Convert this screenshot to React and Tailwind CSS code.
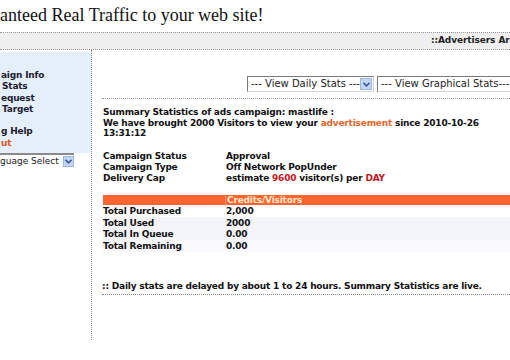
import React from 'react';

const verdana = { fontFamily: '"DejaVu Sans", Verdana, sans-serif' };

function SelectBox({ label, width, clip }) {
  return (
    <div
      className={`flex items-center h-[16px] bg-white border border-[#7a7a7a] border-r-[#d4d4d4] border-b-[#d4d4d4] shrink-0 ${width}`}
    >
      <span className="flex-1 pl-[3px] text-[10px] text-[#222] whitespace-nowrap overflow-hidden leading-none">
        {label}
      </span>
      {!clip && (
        <span className="w-[12px] h-[12px] mr-[1px] flex items-center justify-center bg-[#c3d5f5] border border-[#9db5e0]">
          <svg width="7" height="5" viewBox="0 0 7 5">
            <path d="M0.5 0.8 L3.5 3.8 L6.5 0.8" stroke="#3a5aa0" strokeWidth="1.6" fill="none" />
          </svg>
        </span>
      )}
    </div>
  );
}

export default function App() {
  const summaryRows = [
    ['Campaign Status', <span>Approval</span>],
    ['Campaign Type', <span>Off Network PopUnder</span>],
    [
      'Delivery Cap',
      <span>
        estimate <span className="text-[#c4161c]">9600</span> visitor(s) per{' '}
        <span className="text-[#c4161c]">DAY</span>
      </span>,
    ],
  ];

  const creditRows = [
    ['Total Purchased', '2,000', 'bg-white'],
    ['Total Used', '2000', 'bg-[#f4f5fb]'],
    ['Total In Queue', '0.00', 'bg-[#f4f5fb]'],
    ['Total Remaining', '0.00', 'bg-[#f9f9fd]'],
  ];

  return (
    <div className="w-[510px] h-[360px] overflow-hidden bg-white text-[#111]">
      {/* Page title */}
      <div
        className="h-[32px] pt-[4px] text-[18px] leading-[22px] whitespace-nowrap"
        style={{ fontFamily: '"Liberation Serif", "Times New Roman", serif' }}
      >
        anteed Real Traffic to your web site!
      </div>

      {/* Advertisers bar */}
      <div
        className="h-[18px] border-y border-dotted border-[#9a9a9a] bg-[#efefef] pl-[431px] flex items-center whitespace-nowrap overflow-hidden text-[9px] font-bold tracking-[-0.1px] text-[#222]"
        style={verdana}
      >
        ::Advertisers Ar
      </div>

      <div className="flex" style={verdana}>
        {/* Left menu */}
        <div className="w-[92px] h-[290px] border-r border-dotted border-[#8a8a8a] pt-[2px] shrink-0">
          <div className="h-[101px] bg-[#e5eefb] pt-[18px] pl-[1px] text-[9px] font-bold tracking-[-0.2px] leading-[11.3px] text-[#1c1c2e] whitespace-nowrap overflow-hidden">
            <div>aign Info</div>
            <div className="pl-[1px]">Stats</div>
            <div>equest</div>
            <div className="pl-[1px]">Target</div>
            <div className="h-[11.3px]" />
            <div>g Help</div>
            <div className="text-[#e0541e]">ut</div>
          </div>
          <div className="flex items-center h-[14px] w-[74px] border-t-2 border-[#8a8a8a] bg-white">
            <span className="flex-1 text-[9px] text-[#222] leading-none whitespace-nowrap overflow-hidden">
              guage Select
            </span>
            <span className="w-[11px] h-[11px] flex items-center justify-center bg-[#c3d5f5] border border-[#9db5e0]">
              <svg width="7" height="5" viewBox="0 0 7 5">
                <path d="M0.5 0.8 L3.5 3.8 L6.5 0.8" stroke="#3a5aa0" strokeWidth="1.6" fill="none" />
              </svg>
            </span>
          </div>
        </div>

        {/* Main content */}
        <div className="flex-1 min-w-0">
          <div className="flex gap-[3px] pl-[155px] pt-[26px] overflow-hidden">
            <SelectBox label="--- View Daily Stats ---" width="w-[127px]" />
            <SelectBox label="--- View Graphical Stats---" width="w-[140px]" clip />
          </div>

          <div className="ml-[10px] mt-[6px] border-t border-dotted border-[#a0a0a0]" />

          <div className="pl-[11px] pt-[8px] text-[9px] font-bold tracking-[-0.2px] leading-[10.5px] text-[#111]">
            <div>Summary Statistics of ads campaign: mastlife :</div>
            <div>
              We have brought 2000 Visitors to view your{' '}
              <span className="text-[#e2662c]">advertisement</span> since 2010-10-26
              <br />
              13:31:12
            </div>

            <div className="mt-[12px]">
              {summaryRows.map(([label, value]) => (
                <div key={label} className="flex h-[11.3px] items-center">
                  <span className="w-[123px] shrink-0">{label}</span>
                  {value}
                </div>
              ))}
            </div>

            <div className="mt-[11px] -mr-[20px]">
              <div className="flex h-[10px] items-center bg-[#fa6431]">
                <span className="w-[122px] shrink-0 h-full" />
                <span className="border-l border-[#fb9a6f] pl-[1px] text-[#ffe8c8]">Credits/Visitors</span>
              </div>
              {creditRows.map(([label, value, bg]) => (
                <div key={label} className={`flex h-[11.6px] items-center ${bg}`}>
                  <span className="w-[123px] shrink-0">{label}</span>
                  <span>{value}</span>
                </div>
              ))}
            </div>
          </div>

          <div className="ml-[10px] mt-[28px] border-b border-dotted border-[#8a8a8a] pb-[1px] text-[9px] font-bold tracking-[-0.2px] text-[#111] whitespace-nowrap">
            :: Daily stats are delayed by about 1 to 24 hours. Summary Statistics are live.
          </div>
        </div>
      </div>
    </div>
  );
}
